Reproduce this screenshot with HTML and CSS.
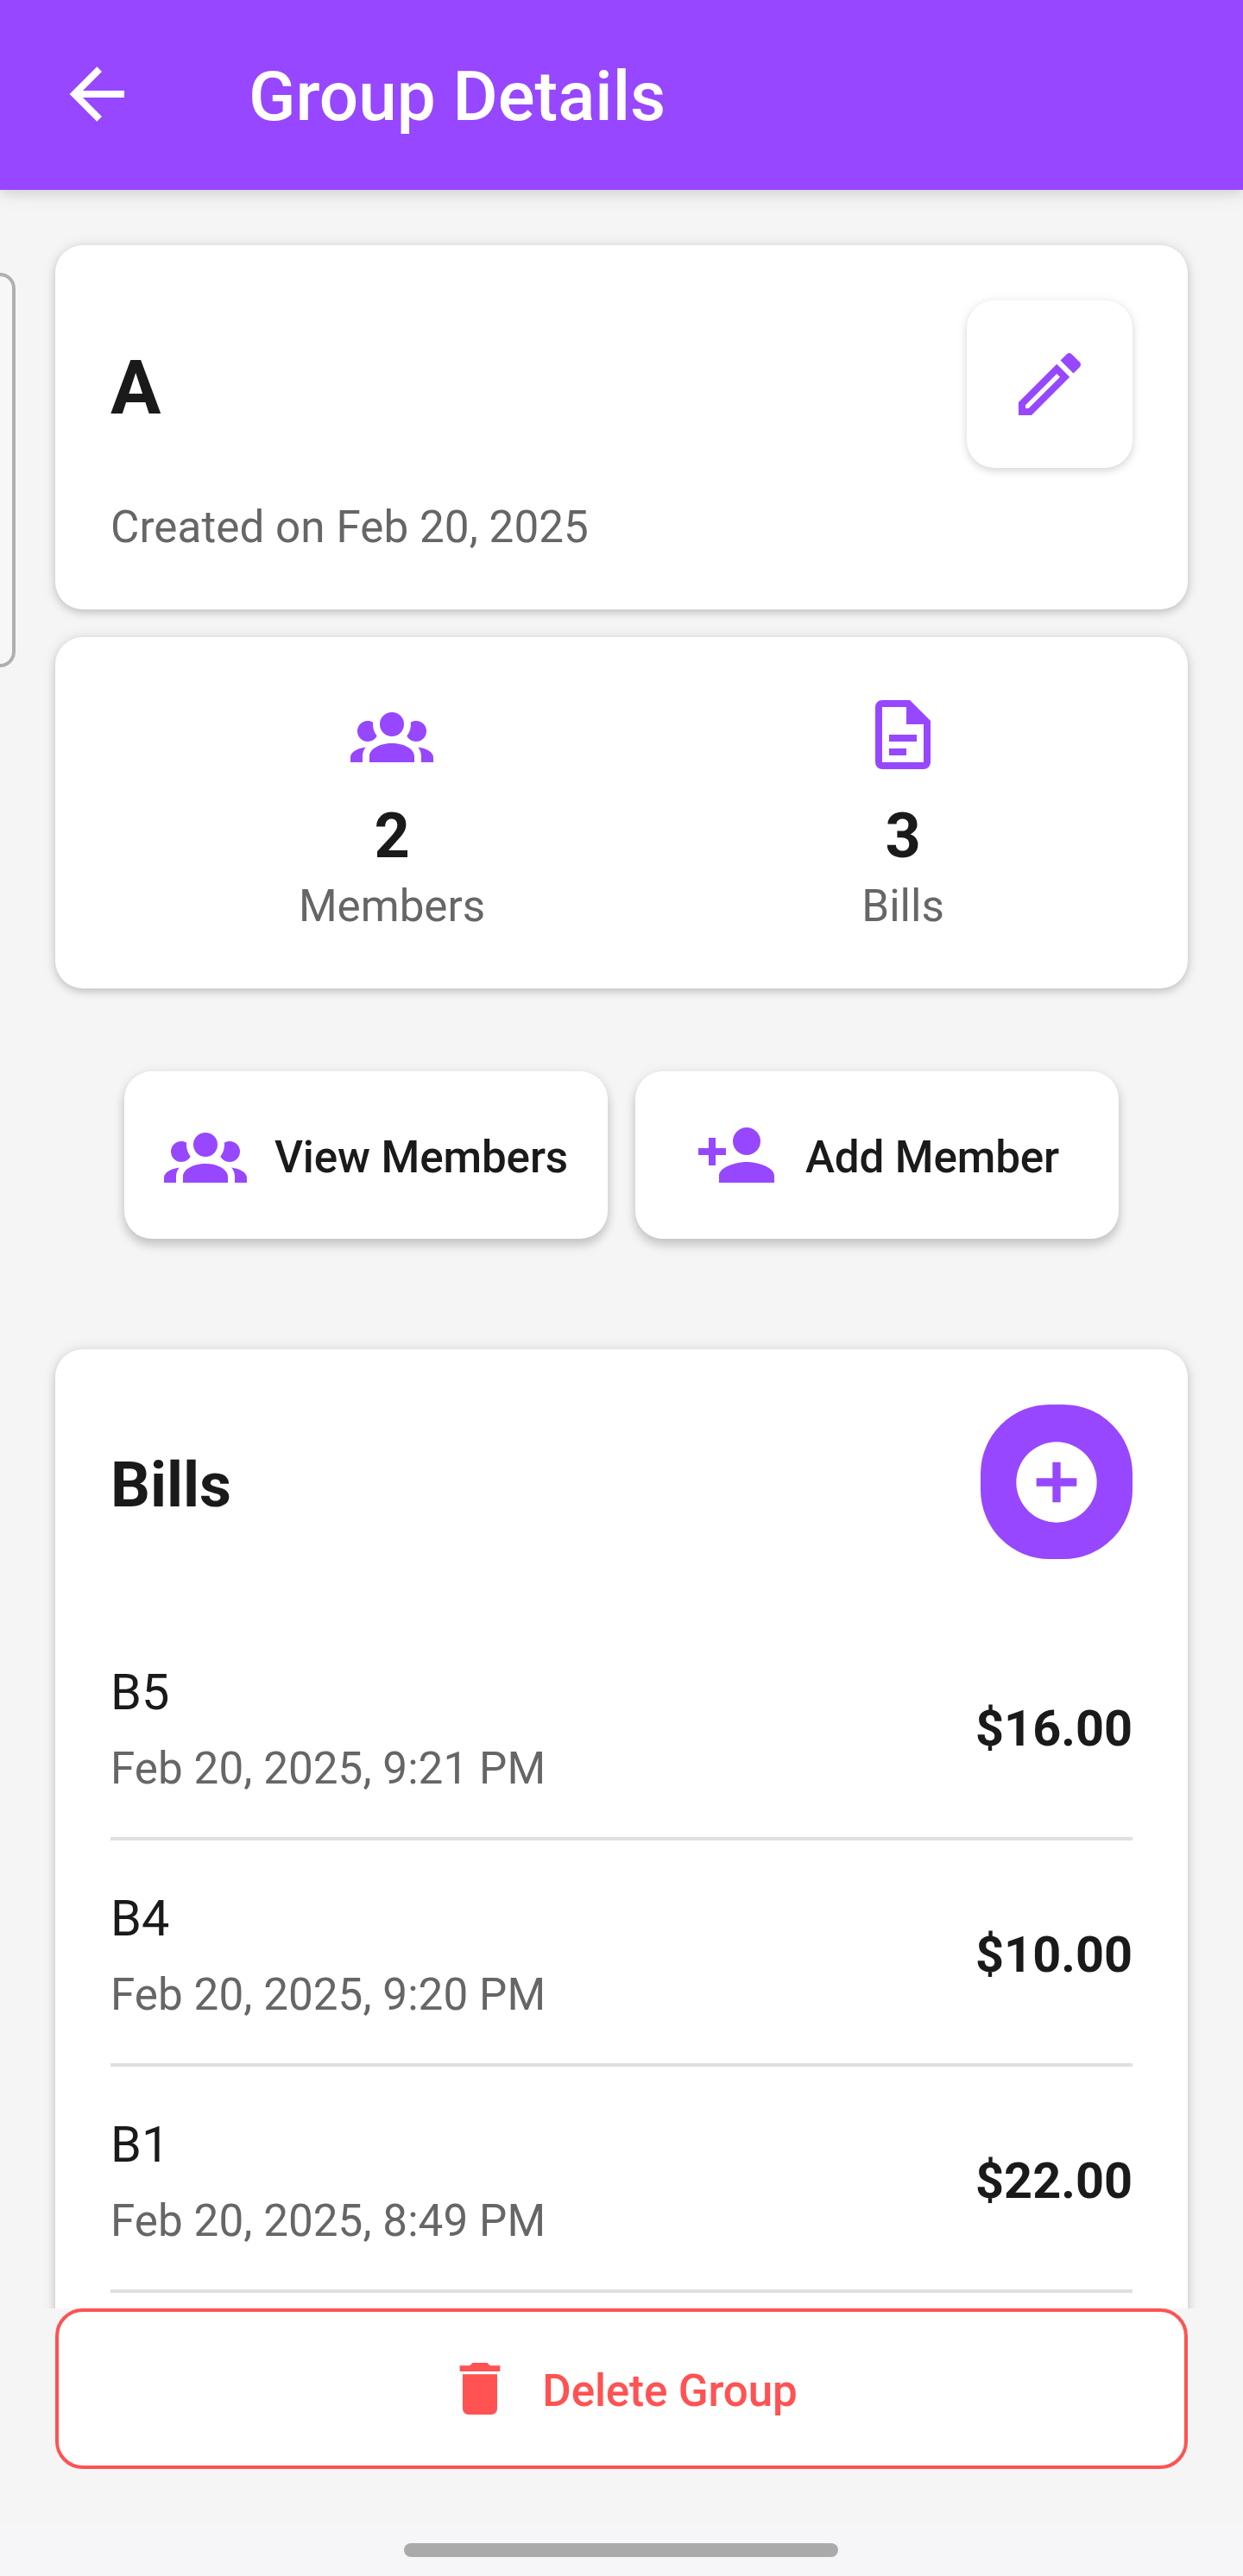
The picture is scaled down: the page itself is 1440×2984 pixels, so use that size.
FILE: index.html
```html
<!DOCTYPE html>
<html lang="en">
<head>
<meta charset="utf-8">
<title>Group Details</title>
<link rel="stylesheet" href="styles.css">
</head>
<body>
<svg class="defs" width="0" height="0" aria-hidden="true">
  <symbol id="account-group" viewBox="0 0 24 24"><path d="M12,5.5A3.5,3.5 0 0,1 15.5,9A3.5,3.5 0 0,1 12,12.5A3.5,3.5 0 0,1 8.5,9A3.5,3.5 0 0,1 12,5.5M5,8C5.56,8 6.08,8.15 6.53,8.42C6.38,9.85 6.8,11.27 7.66,12.38C7.16,13.34 6.16,14 5,14A3,3 0 0,1 2,11A3,3 0 0,1 5,8M19,8A3,3 0 0,1 22,11A3,3 0 0,1 19,14C17.84,14 16.84,13.34 16.34,12.38C17.2,11.27 17.62,9.85 17.47,8.42C17.92,8.15 18.44,8 19,8M5.5,18.25C5.5,16.18 8.41,14.5 12,14.5C15.59,14.5 18.5,16.18 18.5,18.25V20H5.5V18.25M0,20V18.5C0,17.11 1.89,15.94 4.45,15.6C3.86,16.28 3.5,17.22 3.5,18.25V20H0M24,20H20.5V18.25C20.5,17.22 20.14,16.28 19.55,15.6C22.11,15.94 24,17.11 24,18.5V20Z"/></symbol>
</svg>
<div class="screen">
  <header class="appbar">
    <svg class="icon" viewBox="0 0 24 24"><path d="M20,11V13H8L13.5,18.5L12.08,19.92L4.16,12L12.08,4.08L13.5,5.5L8,11H20Z"/></svg>
    <h1 class="appbar-title">Group Details</h1>
  </header>

  <main class="content">
    <section class="card group">
      <div class="group-head">
        <h2 class="group-name">A</h2>
        <div class="edit-button"><svg class="icon" viewBox="0 0 24 24"><path d="M14.06,9L15,9.94L5.92,19H5V18.08L14.06,9M17.66,3C17.41,3 17.15,3.1 16.96,3.29L15.13,5.12L18.88,8.87L20.71,7.04C21.1,6.65 21.1,6 20.71,5.63L18.37,3.29C18.17,3.09 17.92,3 17.66,3M14.06,6.19L3,17.25V21H6.75L17.81,9.94L14.06,6.19Z"/></svg></div>
      </div>
      <p class="created">Created on Feb 20, 2025</p>
    </section>

    <section class="card stats">
      <div class="stat">
        <svg class="icon"><use href="#account-group"/></svg>
        <span class="stat-value">2</span>
        <span class="stat-label">Members</span>
      </div>
      <div class="stat">
        <svg class="icon" viewBox="0 0 24 24"><path d="M6,2A2,2 0 0,0 4,4V20A2,2 0 0,0 6,22H18A2,2 0 0,0 20,20V8L14,2H6M6,4H13V9H18V20H6V4M8,12V14H16V12H8M8,16V18H13V16H8Z"/></svg>
        <span class="stat-value">3</span>
        <span class="stat-label">Bills</span>
      </div>
    </section>

    <div class="actions">
      <div class="action"><svg class="icon"><use href="#account-group"/></svg><span>View Members</span></div>
      <div class="action"><svg class="icon" viewBox="0 0 24 24"><path d="M15,14C12.33,14 7,15.33 7,18V20H23V18C23,15.33 17.67,14 15,14M6,10V7H4V10H1V12H4V15H6V12H9V10M15,12A4,4 0 0,0 19,8A4,4 0 0,0 15,4A4,4 0 0,0 11,8A4,4 0 0,0 15,12Z"/></svg><span>Add Member</span></div>
    </div>

    <section class="card bills">
      <div class="bills-head">
        <h2 class="bills-title">Bills</h2>
        <div class="add-button"><svg class="icon" viewBox="0 0 24 24"><path d="M17,13H13V17H11V13H7V11H11V7H13V11H17M12,2A10,10 0 0,0 2,12A10,10 0 0,0 12,22A10,10 0 0,0 22,12A10,10 0 0,0 12,2Z"/></svg></div>
      </div>
      <div class="bill">
        <div class="bill-info"><span class="bill-name">B5</span><span class="bill-date">Feb 20, 2025, 9:21 PM</span></div>
        <span class="bill-amount">$16.00</span>
      </div>
      <div class="bill">
        <div class="bill-info"><span class="bill-name">B4</span><span class="bill-date">Feb 20, 2025, 9:20 PM</span></div>
        <span class="bill-amount">$10.00</span>
      </div>
      <div class="bill">
        <div class="bill-info"><span class="bill-name">B1</span><span class="bill-date">Feb 20, 2025, 8:49 PM</span></div>
        <span class="bill-amount">$22.00</span>
      </div>
    </section>
  </main>

  <footer class="footer">
    <div class="delete-button">
      <svg class="icon" viewBox="0 0 24 24"><path d="M19,4H15.5L14.5,3H9.5L8.5,4H5V6H19M6,19A2,2 0 0,0 8,21H16A2,2 0 0,0 18,19V7H6V19Z"/></svg>
      <span>Delete Group</span>
    </div>
  </footer>
  <div class="navbar"><div class="nav-pill"></div></div>
  <div class="edge-handle"></div>
</div>
</body>
</html>
```
FILE: styles.css
```css
* { box-sizing: border-box; margin: 0; padding: 0; }
body {
  font-family: Roboto, "Liberation Sans", sans-serif;
  color: #1a1a1a;
  background: #f5f5f5;
}
.defs { display: block; position: absolute; }
.screen {
  position: relative;
  width: 1440px;
  height: 2984px;
  display: flex;
  flex-direction: column;
  overflow: hidden;
}
.icon { display: block; width: 96px; height: 96px; flex: none; fill: #9747ff; }

.appbar {
  position: relative;
  z-index: 1;
  flex: none;
  height: 220px;
  padding: 0 64px 3px;
  display: flex;
  align-items: center;
  gap: 128px;
  background: #9747ff;
  box-shadow: 0 4px 12px rgba(0, 0, 0, .1), 0 6px 26px rgba(0, 0, 0, .06);
}
.appbar .icon { fill: #fff; }
.appbar-title { font-size: 80px; font-weight: 500; line-height: 100px; color: #fff; padding-top: 6px; }

.content {
  flex: 1;
  min-height: 0;
  padding: 64px 64px 0;
  overflow: hidden;
}
.card {
  background: #fff;
  border-radius: 32px;
  padding: 64px;
  box-shadow: 0 4px 9px rgba(0, 0, 0, .13), 0 1px 16px rgba(0, 0, 0, .12);
}
.group { height: 422px; }
.group-head { display: flex; justify-content: space-between; align-items: center; height: 194px; }
.group-name { font-size: 87px; font-weight: 700; line-height: 112px; padding-top: 8px; }
.edit-button {
  width: 192px;
  height: 194px;
  display: flex;
  align-items: center;
  justify-content: center;
  border-radius: 32px;
  background: #fff;
  box-shadow: 0 4px 9px rgba(0, 0, 0, .1), 0 1px 14px rgba(0, 0, 0, .08);
}
.created { margin-top: 33px; font-size: 51.2px; line-height: 72px; letter-spacing: .06px; color: #666; }

.stats { margin-top: 32px; height: 407px; padding-top: 65px; display: flex; justify-content: space-around; }
.stat { display: flex; flex-direction: column; align-items: center; }
.stat-value { margin-top: 26px; font-size: 72px; font-weight: 700; line-height: 88px; }
.stat-label { margin-top: 1px; font-size: 51.2px; line-height: 72px; color: #666; }

.actions { margin-top: 96px; display: flex; justify-content: center; gap: 32px; }
.action {
  width: 560px;
  height: 194px;
  display: flex;
  align-items: center;
  justify-content: center;
  gap: 32px;
  border-radius: 32px;
  background: #fff;
  font-size: 51.2px;
  font-weight: 500;
  letter-spacing: -.12px;
  box-shadow: 0 8px 12px rgba(0, 0, 0, .15), 0 2px 14px rgba(0, 0, 0, .1);
}
.action span { padding-top: 4px; }

.bills { margin-top: 128px; height: 1300px; }
.bills-head { height: 179px; margin-bottom: 64px; display: flex; justify-content: space-between; align-items: center; }
.bills-title { font-size: 72px; font-weight: 700; line-height: 90px; padding-top: 8px; }
.add-button {
  width: 176px;
  height: 179px;
  display: flex;
  align-items: center;
  justify-content: center;
  border-radius: 80px;
  background: #9747ff;
}
.add-button .icon { width: 112px; height: 112px; fill: #fff; }
.bill {
  height: 262px;
  display: flex;
  align-items: center;
  justify-content: space-between;
  border-bottom: 4px solid #e0e0e0;
}
.bill-info { display: flex; flex-direction: column; padding-top: 10px; }
.bill-name { font-size: 57.6px; line-height: 90px; }
.bill-date { font-size: 51.2px; line-height: 86px; letter-spacing: .06px; color: #666; }
.bill-amount { padding-top: 7px; font-size: 57.6px; line-height: 88px; font-weight: 700; }

.footer { flex: none; height: 250px; padding: 0 64px; }
.delete-button {
  height: 186px;
  display: flex;
  align-items: center;
  justify-content: center;
  gap: 32px;
  border: 4px solid #ff5252;
  border-radius: 32px;
  background: #fff;
  color: #ff5252;
  font-size: 51.2px;
  font-weight: 500;
  letter-spacing: -.15px;
}
.delete-button span { padding-top: 4px; }
.delete-button .icon { width: 80px; height: 80px; fill: #ff5252; }

.navbar { flex: none; height: 60px; padding: 22px 0 0 468px; background: #f6f6f9; }
.nav-pill { width: 503px; height: 16px; border-radius: 8px; background: #aaa; }

.edge-handle {
  position: absolute;
  left: -40px;
  top: 316px;
  width: 58px;
  height: 457px;
  border: 4px solid #b0b0b0;
  border-radius: 18px;
  background: #f7f7f7;
}
```
